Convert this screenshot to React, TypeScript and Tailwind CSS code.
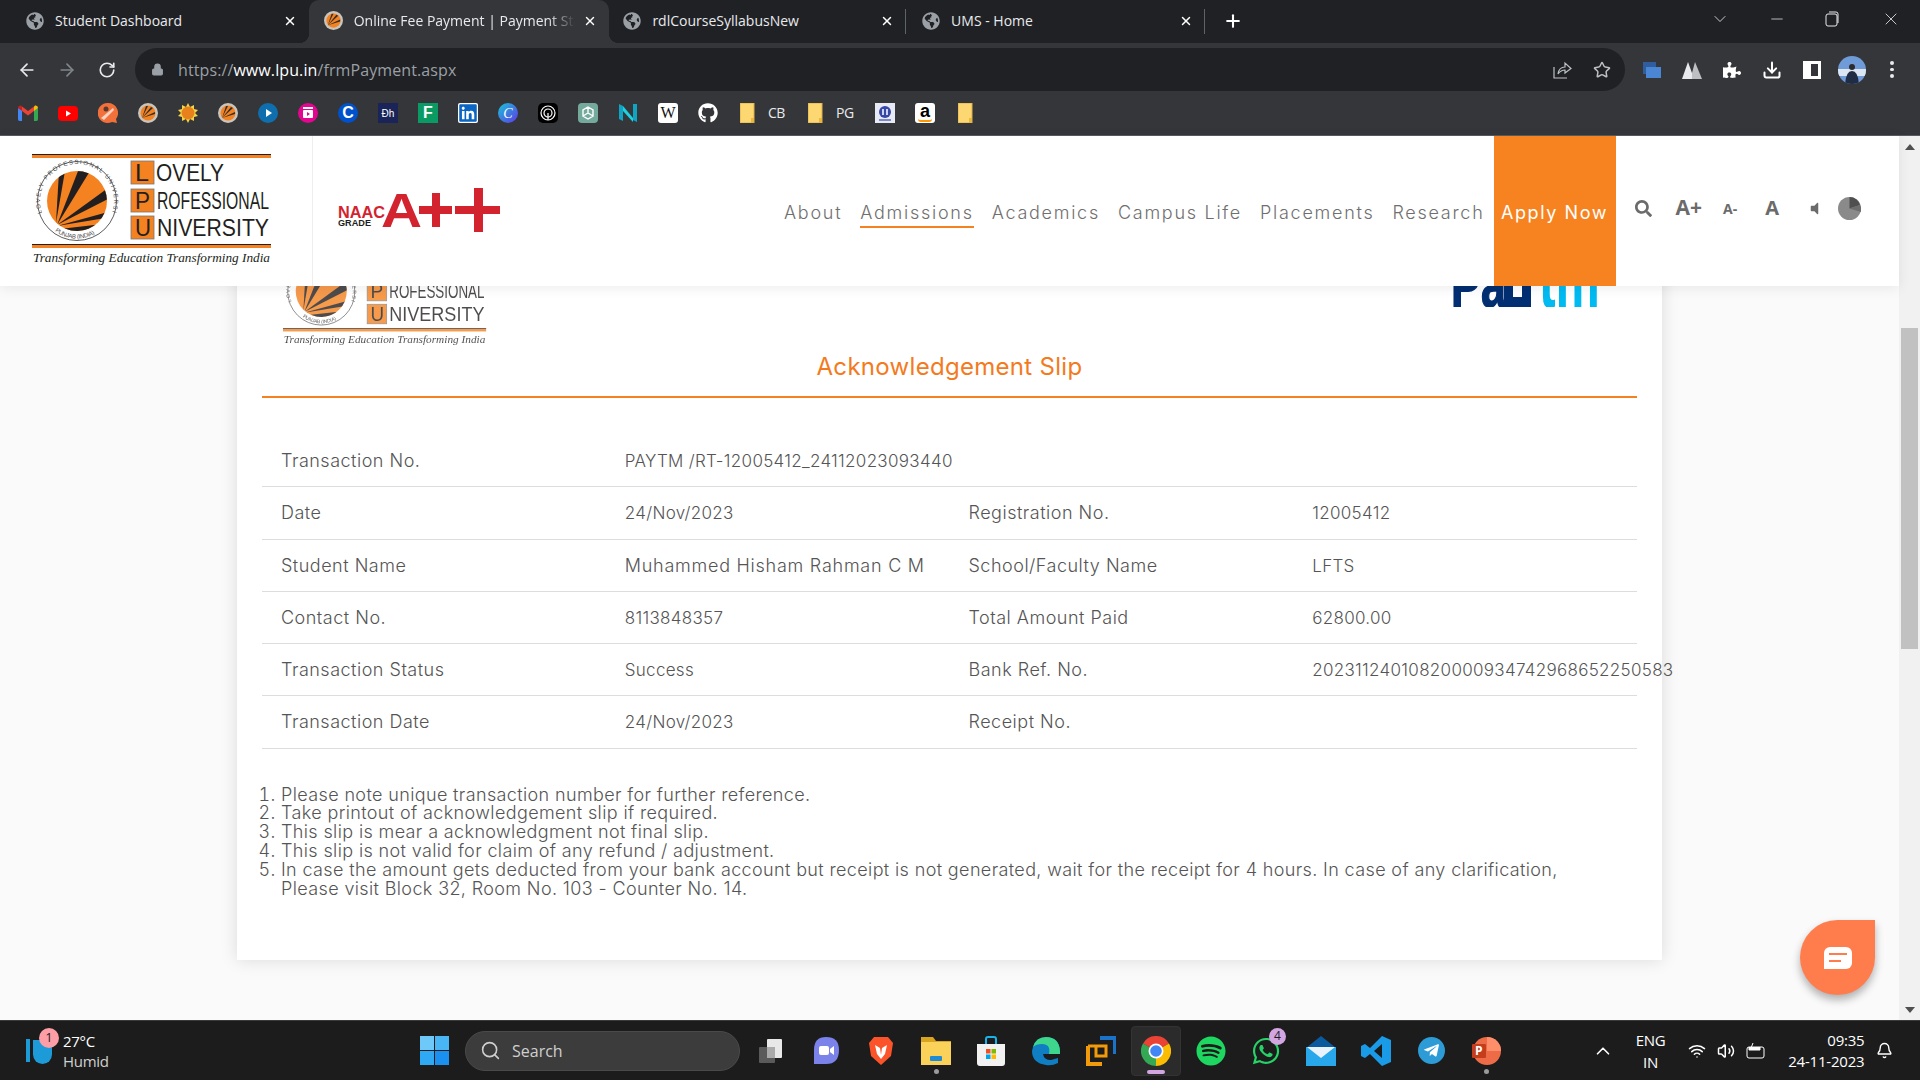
import type { ReactNode } from "react";
import { FaGlobeAmericas, FaGithub, FaWhatsapp, FaTelegramPlane, FaSpotify, FaLinkedin, FaPuzzlePiece, FaSearch, FaVolumeOff } from "react-icons/fa";
import { X, Plus, ArrowLeft, ArrowRight, RotateCw, Lock, Star, Download, ChevronDown, Minus, ChevronUp, Wifi, Volume2, Bell, Search } from "lucide-react";

const Globe = () => <FaGlobeAmericas className="size-[18px] text-[#9aa0a6] shrink-0" />;

const LpuFavicon = ({ size = 20 }: { size?: number }) => (
  <svg width={size} height={size} viewBox="0 0 20 20" className="shrink-0">
    <circle cx="10" cy="10" r="10" fill="#c9c4bc" />
    <circle cx="10" cy="10" r="7.5" fill="#f58220" />
    <path d="M4 15 L8 3 L10 3 Z M4 15 L13 4 L15 5 Z M4 15 L17 9 L17 11 Z" fill="#33302c" />
  </svg>
);

const Tab = ({ icon, title, active, divider }: { icon: ReactNode; title: string; active?: boolean; divider?: boolean }) => (
  <div className={`relative flex items-center h-[43px] pl-[16px] pr-[12px] pb-[2px] ${active ? "w-[300px] -mr-[1.3px] bg-[#35363a] rounded-t-[10px]" : "w-[298.7px]"}`}>
    {active && <div className="absolute bottom-0 -left-[10px] size-[10px] bg-[radial-gradient(circle_at_0_0,transparent_10px,#35363a_10.5px)]" />}
    {active && <div className="absolute bottom-0 -right-[10px] size-[10px] bg-[radial-gradient(circle_at_100%_0,transparent_10px,#35363a_10.5px)]" />}
    <div className="flex w-[18px] justify-center shrink-0">{icon}</div>
    <span className={`ml-[11px] flex-1 overflow-hidden whitespace-nowrap text-[14px] text-[#e8eaed] font-['Open_Sans',sans-serif] ${active ? "[mask-image:linear-gradient(to_right,black_88%,transparent)]" : ""}`}>{title}</span>
    <X className="size-[14px] text-white ml-[8px] shrink-0" strokeWidth={2.5} />
    {divider && <div className="absolute right-0 top-[9px] w-px h-[25px] bg-[#5f6368]" />}
  </div>
);

const TabStrip = () => (
  <div className="flex items-center h-[43px] bg-[#202124] pl-[10px] shrink-0">
    <Tab icon={<Globe />} title="Student Dashboard" />
    <Tab icon={<LpuFavicon size={19} />} title="Online Fee Payment | Payment Status" active />
    <Tab icon={<Globe />} title="rdlCourseSyllabusNew" divider />
    <Tab icon={<Globe />} title="UMS - Home" divider />
    <Plus className="size-[20px] text-white ml-[18px] mb-[2px]" strokeWidth={2.5} />
    <div className="ml-auto flex items-center pb-[6px] text-[#e8eaed]">
      <ChevronDown className="size-[20px] mr-[38px]" strokeWidth={1} />
      <Minus className="size-[18px] mr-[39px]" strokeWidth={1} />
      <svg width="14" height="16" viewBox="0 0 14 16" fill="none" stroke="currentColor" className="mr-[42px]">
        <rect x="1" y="3" width="11" height="12" rx="2" />
        <path d="M4 1 H11 Q13 1 13 3 V12" />
      </svg>
      <X className="size-[20px] mr-[19px]" strokeWidth={1} />
    </div>
  </div>
);

const Extension = ({ children }: { children: ReactNode }) => <div className="flex w-[40px] h-[40px] items-center justify-center shrink-0">{children}</div>;

const Toolbar = () => (
  <div className="flex items-center h-[48px] bg-[#35363a] shrink-0 pt-[5px] pb-0">
    <div className="flex w-[135px] pl-[7px] shrink-0">
      <Extension><ArrowLeft className="size-[20px] text-[#e8eaed]" /></Extension>
      <Extension><ArrowRight className="size-[20px] text-[#80868b]" /></Extension>
      <Extension><RotateCw className="size-[18px] text-[#e8eaed]" strokeWidth={2.2} /></Extension>
    </div>
    <div className="flex items-center flex-1 h-[43px] bg-[#202124] rounded-full pl-[16px] pr-[3px]">
      <Lock className="size-[13px] text-[#9aa0a6] fill-[#9aa0a6]" />
      <div className="ml-[14px] flex-1 text-[16px] text-[#9aa0a6] font-['Open_Sans',sans-serif] tracking-[0.1px]">
        https://<span className="text-white">www.lpu.in</span>/frmPayment.aspx
      </div>
      <Extension>
        <svg width="20" height="20" viewBox="0 0 20 20" fill="none" stroke="#bdc1c6" strokeWidth="1.2">
          <path d="M2 7 V18 H15" />
          <path d="M6 14 Q7 7 13 7 V3 L19 8.5 L13 13 V10 Q9 10 6 14 Z" />
        </svg>
      </Extension>
      <Extension><Star className="size-[18px] text-[#bdc1c6]" strokeWidth={2} /></Extension>
    </div>
    <div className="flex w-[295px] pl-[7px] shrink-0 items-center">
      <Extension>
        <svg width="20" height="20" viewBox="0 0 20 20"><rect x="1" y="2" width="13" height="12" fill="#2f5d9e" /><rect x="4" y="7" width="15" height="11" fill="#4a86d4" /></svg>
      </Extension>
      <Extension>
        <svg width="20" height="18" viewBox="0 0 20 18"><path d="M0 18 L6 1 L10 12 L10 18 Z" fill="#e8eaed" /><path d="M10 12 L13 1 L20 18 L10 18 Z" fill="#bdbfc2" /></svg>
      </Extension>
      <Extension><FaPuzzlePiece className="size-[18px] text-white" /></Extension>
      <Extension><Download className="size-[20px] text-white" strokeWidth={2.4} /></Extension>
      <Extension>
        <div className="flex size-[18px] justify-end bg-white"><div className="w-[7px] h-[12px] my-[3px] mr-[3px] bg-[#35363a]" /></div>
      </Extension>
      <Extension>
        <svg width="28" height="28" viewBox="0 0 28 28">
          <clipPath id="avatar"><circle cx="14" cy="14" r="14" /></clipPath>
          <g clipPath="url(#avatar)">
            <rect width="28" height="28" fill="#6f9bd8" />
            <path d="M0 13 H28 V20 H0 Z" fill="#dbe6f2" />
            <circle cx="14" cy="11" r="3" fill="#2b2a2e" />
            <path d="M7 28 Q8 15 14 15 Q20 15 21 28 Z" fill="#1f2c44" />
          </g>
        </svg>
      </Extension>
      <Extension>
        <div className="flex flex-col gap-[3px]"><div className="size-[3.5px] rounded-full bg-[#e8eaed]" /><div className="size-[3.5px] rounded-full bg-[#e8eaed]" /><div className="size-[3.5px] rounded-full bg-[#e8eaed]" /></div>
      </Extension>
    </div>
  </div>
);

const Folder = () => (
  <svg width="15" height="20" viewBox="0 0 15 20">
    <path d="M0 0 H14 V20 H0 Z" fill="#fcd772" />
    <path d="M11 20 V15 H14 V20 Z" fill="#e8b93e" />
    <path d="M0 0 H14 V20 H0 Z" fill="none" stroke="#e0b040" />
  </svg>
);

const Mark = ({ className, children }: { className: string; children?: ReactNode }) => (
  <div className={`flex size-[20px] items-center justify-center overflow-hidden font-['Liberation_Sans',sans-serif] font-bold text-white ${className}`}>{children}</div>
);

const bookmarks: ReactNode[] = [
  <svg key="g" width="20" height="16" viewBox="0 0 20 16">
    <path d="M0 14 V3 L4 5 V16 H1.5 Q0 16 0 14 Z" fill="#4285f4" />
    <path d="M20 14 V3 L16 5 V16 H18.5 Q20 16 20 14 Z" fill="#34a853" />
    <path d="M4 6 L10 10.5 L16 6 V1.5 L10 6 L4 1.5 Z" fill="#ea4335" />
    <path d="M0 3 Q0 0 3 .5 L4 1.5 V6 Z" fill="#c5221f" />
    <path d="M20 3 Q20 0 17 .5 L16 1.5 V6 Z" fill="#fbbc04" />
  </svg>,
  <svg key="y" width="20" height="15" viewBox="0 0 20 15"><rect width="20" height="15" rx="4" fill="#f00" /><path d="M8 4.5 L13 7.5 L8 10.5 Z" fill="#fff" /></svg>,
  <svg key="o" width="20" height="20" viewBox="0 0 20 20"><path d="M10 0 A10 10 0 0 1 18 16 L19 20 L14 19 A10 10 0 1 1 10 0 Z" fill="#f2703a" /><path d="M3 15 L15 5 L16 7 L6 17 Z" fill="#fbd3c0" /><circle cx="8" cy="6" r="2.5" fill="#5b3a2e" /></svg>,
  <LpuFavicon key="l1" />,
  <svg key="s" width="20" height="20" viewBox="0 0 20 20"><path d="M10 0 L12 4 L16 2 L16 6 L20 7 L17 10 L20 13 L16 14 L16 18 L12 16 L10 20 L8 16 L4 18 L4 14 L0 13 L3 10 L0 7 L4 6 L4 2 L8 4 Z" fill="#f5d547" /><circle cx="10" cy="10" r="6.5" fill="#e8801c" /></svg>,
  <LpuFavicon key="l2" />,
  <svg key="p" width="20" height="20" viewBox="0 0 20 20"><circle cx="10" cy="10" r="10" fill="#0f6fae" /><path d="M8 6 L14 10 L8 14 Z" fill="#fff" /></svg>,
  <svg key="c" width="20" height="20" viewBox="0 0 20 20"><circle cx="10" cy="10" r="10" fill="#e2078e" /><rect x="5" y="7" width="10" height="8" rx="1" fill="#fff" /><path d="M5 4 H15 V6 H5 Z" fill="#fff" /><path d="M9 9 L12 11 L9 13 Z" fill="#e2078e" /></svg>,
  <Mark key="cb" className="rounded-full bg-[#0052cc] text-[16px]">C</Mark>,
  <Mark key="dh" className="bg-[#1a2459] text-[10px] !font-normal">Ðh</Mark>,
  <Mark key="f" className="bg-[#0a9a63] text-[16px]">F</Mark>,
  <FaLinkedin key="li" className="size-[20px] text-[#0a66c2] bg-white rounded-[2px]" />,
  <div key="cv" className="flex size-[20px] items-center justify-center rounded-full bg-[linear-gradient(135deg,#19c5d8,#5f38e8)] text-white text-[14px] italic font-['Liberation_Serif',serif]">C</div>,
  <svg key="fp" width="20" height="20" viewBox="0 0 20 20" fill="none"><rect width="20" height="20" rx="5" fill="#000" /><circle cx="10" cy="10" r="7" stroke="#fff" strokeWidth="1.2" /><circle cx="10" cy="10" r="4" stroke="#fff" strokeWidth="1.2" /><path d="M10 10 V17" stroke="#fff" strokeWidth="1.2" /></svg>,
  <svg key="gpt" width="20" height="20" viewBox="0 0 20 20" fill="none"><rect width="20" height="20" rx="4" fill="#74aa9c" /><path d="M10 4 L15 7 V13 L10 16 L5 13 V7 Z M10 4 V10 M15 13 L10 10 L5 13" stroke="#fff" strokeWidth="1.4" /></svg>,
  <svg key="n" width="20" height="20" viewBox="0 0 20 20"><path d="M1 1 L5 3 V18 L1 16 Z" fill="#0fa4c4" /><path d="M5 3 L15 15 V19 L5 8 Z" fill="#1fd0e0" /><path d="M15 1 H19 V19 L15 17 Z" fill="#0fa4c4" /></svg>,
  <div key="w" className="flex size-[20px] items-center justify-center rounded-[3px] bg-white text-[#111] text-[16px] font-['Liberation_Serif',serif]">W</div>,
  <FaGithub key="gh" className="size-[20px] text-white" />,
];

const Bookmarks = () => (
  <div className="flex items-center h-[45px] bg-[#35363a] pl-[8px] shrink-0 border-b border-[#5a5b5e]">
    {bookmarks.map((b, i) => (
      <div key={i} className="flex w-[40px] justify-center">{b}</div>
    ))}
    <div className="flex items-center w-[68px] pl-[12px] gap-[13px] text-[14px] leading-[18px] pb-[1px] text-[#e8eaed] font-['Open_Sans',sans-serif] tracking-[-0.5px]"><Folder />CB</div>
    <div className="flex items-center w-[69px] pl-[12px] gap-[13px] text-[14px] leading-[18px] pb-[1px] text-[#e8eaed] font-['Open_Sans',sans-serif] tracking-[-0.5px]"><Folder />PG</div>
    <div className="flex w-[40px] justify-center">
      <svg width="20" height="20" viewBox="0 0 20 20"><rect width="20" height="20" fill="#e7e9f5" /><circle cx="10" cy="9" r="6" fill="#3548a8" /><path d="M8 6 V12 M12 6 V12" stroke="#fff" strokeWidth="1.5" /><rect x="4" y="16" width="12" height="2" fill="#7c89c9" /></svg>
    </div>
    <div className="flex w-[40px] justify-center">
      <div className="relative flex size-[20px] justify-center rounded-[3px] bg-white text-black text-[18px] font-bold leading-[16px] font-['Liberation_Sans',sans-serif]">
        a
        <div className="absolute bottom-[1px] left-[3px] w-[14px] h-[3px] rounded-b-full border-b-2 border-[#f90]" />
      </div>
    </div>
    <div className="flex w-[40px] justify-center"><Folder /></div>
  </div>
);

const LpuLogo = ({ width, id }: { width: number; id: string }) => (
  <svg width={width} height={(width * 120) / 240} viewBox="0 0 240 120" className="shrink-0">
    <defs>
      <clipPath id={`${id}-disc`}><circle cx="45" cy="50" r="30" /></clipPath>
      <path id={`${id}-top`} d="M10 62 A37 37 0 1 1 80 62" />
      <path id={`${id}-bottom`} d="M23 80 A36 36 0 0 0 67 80" />
    </defs>
    <rect x="0" y="4" width="239" height="3" fill="#f58220" />
    <rect x="0" y="3" width="239" height="1" fill="#231f20" />
    <rect x="0" y="94" width="239" height="3" fill="#f58220" />
    <rect x="0" y="93" width="239" height="1" fill="#231f20" />
    <circle cx="45" cy="50" r="39.5" fill="#fff" stroke="#333" strokeWidth="0.8" />
    <circle cx="45" cy="50" r="30" fill="#f58220" />
    <g clipPath={`url(#${id}-disc)`} fill="#231f20">
      <path d="M24 72 L27 20 L33 20 Z" />
      <path d="M25 74 L48 15 L58 20 Z" />
      <path d="M25 74 L80 34 L80 46 Z" />
      <path d="M25 75 L80 60 L80 66 Z" />
      <path d="M28 78 L80 72 L80 76 L30 82 Z" />
    </g>
    <g fontFamily="'Liberation Sans',sans-serif" fontSize="6" fill="#444">
      <text><textPath href={`#${id}-top`} textLength="150">LOVELY PROFESSIONAL UNIVERSITY</textPath></text>
      <text><textPath href={`#${id}-bottom`} textLength="42">PUNJAB (INDIA)</textPath></text>
    </g>
    <g fill="#f58220" stroke="#777" strokeWidth="0.8">
      <rect x="99" y="10" width="23" height="23" />
      <rect x="99" y="38" width="23" height="23" />
      <rect x="99" y="65" width="23" height="23" />
    </g>
    <g fontFamily="'Liberation Sans',sans-serif" fill="#231f20" fontSize="24">
      <text x="103" y="30" textLength="14" lengthAdjust="spacingAndGlyphs">L</text>
      <text x="103" y="58" textLength="15" lengthAdjust="spacingAndGlyphs">P</text>
      <text x="103" y="85" textLength="16" lengthAdjust="spacingAndGlyphs">U</text>
      <text x="124" y="30" textLength="68" lengthAdjust="spacingAndGlyphs">OVELY</text>
      <text x="125" y="58" textLength="112" lengthAdjust="spacingAndGlyphs">ROFESSIONAL</text>
      <text x="125" y="85" textLength="112" lengthAdjust="spacingAndGlyphs">NIVERSITY</text>
    </g>
    <text x="1" y="111" textLength="237" lengthAdjust="spacingAndGlyphs" fontFamily="'Liberation Serif',serif" fontStyle="italic" fontSize="13" fill="#231f20">Transforming Education Transforming India</text>
  </svg>
);

const NaacMark = () => (
  <svg width="165" height="46" viewBox="0 0 165 46" className="shrink-0">
    <text x="0" y="30" fontFamily="'Liberation Sans',sans-serif" fontWeight="bold" fontSize="17" fill="#d2232f" textLength="47" lengthAdjust="spacingAndGlyphs">NAAC</text>
    <text x="0" y="38" fontFamily="'Liberation Sans',sans-serif" fontWeight="bold" fontSize="9" fill="#231f20" textLength="33" lengthAdjust="spacingAndGlyphs">GRADE</text>
    <text x="43" y="39" fontFamily="'Liberation Sans',sans-serif" fontWeight="bold" fontSize="48" fill="#d2232f" textLength="41" lengthAdjust="spacingAndGlyphs">A</text>
    <path d="M81 18 H114 V26 H81 Z M94 5 H102 V39 H94 Z" fill="#d2232f" />
    <path d="M117 18 H162 V26 H117 Z M136 0 H145 V44 H136 Z" fill="#d2232f" />
  </svg>
);

const navItems = ["About", "Admissions", "Academics", "Campus Life", "Placements", "Research"];

const SiteHeader = () => (
  <header className="relative z-10 flex items-stretch h-[150px] bg-white shadow-[0_2px_12px_rgba(0,0,0,0.08)] shrink-0">
    <div className="flex items-center w-[313px] pl-[32px] border-r border-[#eeeeee] shrink-0">
      <LpuLogo width={240} id="head" />
    </div>
    <div className="flex items-center pl-[25px] w-[471px] shrink-0"><NaacMark /></div>
    <nav className="flex items-center gap-[18px] pt-[3px] text-[18px] leading-[26px] font-light text-[#6f6f6f] tracking-[1.73px] font-['Inter',sans-serif]">
      {navItems.map((item) => (
        <span key={item} className={`whitespace-nowrap ${item === "Admissions" ? "pt-[2px] border-b-2 border-[#f58220]" : ""}`}>{item}</span>
      ))}
    </nav>
    <div className="flex items-center justify-center w-[122px] ml-[9px] pt-[3px] bg-[#f78320] text-white text-[18px] tracking-[1.6px] font-['Inter',sans-serif] shrink-0">Apply Now</div>
    <div className="flex items-center pl-[19px] pb-[6px] text-[#6b6b6b] font-['Open_Sans',sans-serif] font-bold">
      <FaSearch className="size-[17px]" />
      <span className="ml-[24px] text-[21px]">A+</span>
      <span className="ml-[21px] text-[14px]">A-</span>
      <span className="ml-[28px] text-[20px]">A</span>
      <FaVolumeOff className="ml-[28px] size-[15px]" />
      <svg width="23" height="23" viewBox="0 0 23 23" className="ml-[16px]">
        <circle cx="11.5" cy="11.5" r="11.5" fill="#8a8a8a" />
        <path d="M11.5 11.5 L11.5 0 A11.5 11.5 0 0 1 22 8 Z" fill="#4f4f4f" />
        <path d="M11.5 11.5 L22 8 A11.5 11.5 0 0 1 23 15 Z" fill="#6d6d6d" />
      </svg>
    </div>
  </header>
);

const rows: [string, string, string?, string?][] = [
  ["Transaction No.", "PAYTM /RT-12005412_24112023093440"],
  ["Date", "24/Nov/2023", "Registration No.", "12005412"],
  ["Student Name", "Muhammed Hisham Rahman C M", "School/Faculty Name", "LFTS"],
  ["Contact No.", "8113848357", "Total Amount Paid", "62800.00"],
  ["Transaction Status", "Success", "Bank Ref. No.", "20231124010820000934742968652250583"],
  ["Transaction Date", "24/Nov/2023", "Receipt No.", ""],
];

const Label = ({ children }: { children?: string }) => (
  <span className="pl-[19px] whitespace-nowrap leading-[24px] text-[18px] tracking-[0.5px]">{children}</span>
);

const Value = ({ children }: { children?: string }) => (
  <span className={`pl-[19px] whitespace-nowrap leading-[24px] ${children === "Muhammed Hisham Rahman C M" ? "text-[18px] tracking-[0.75px]" : "text-[17px] tracking-[0.3px]"}`}>{children}</span>
);

const Slip = () => (
  <div className="w-[1425px] h-[712px] ml-[237px] -mt-[38px] bg-white shadow-[0_0_16px_rgba(0,0,0,0.13)] font-['Inter',sans-serif] shrink-0">
    <div className="flex justify-between pl-[46px] pr-[62px] h-[102px]">
      <div className="pt-[1px] opacity-80"><LpuLogo width={204} id="slip" /></div>
      <svg width="149" height="21" viewBox="0 0 149 21" className="mt-[38px]">
        <g fontFamily="'Liberation Sans',sans-serif" fontWeight="bold">
          <text x="0" y="21" fontSize="64" fill="#022f72" stroke="#022f72" strokeWidth="1.5" textLength="80" lengthAdjust="spacingAndGlyphs">Pa<tspan fill="none" stroke="none">y</tspan></text>
          <text x="88" y="21" fontSize="84" fill="#00baf2" textLength="61" lengthAdjust="spacingAndGlyphs">tm</text>
        </g>
        <path d="M53 0 H62 V11 H71 V0 H80 V21 H53 Z" fill="#022f72" />
      </svg>
    </div>
    <h1 className="mt-[2px] text-center text-[24px] leading-[30px] text-[#f47a20] tracking-[0.3px]">Acknowledgement Slip</h1>
    <div className="mx-[25px]">
      <div className="mt-[14px] h-[2px] bg-[#f58220]" />
      <div className="mt-[37px] font-light text-[#555555]">
        {rows.map((r) => (
          <div key={r[0]} className="grid grid-cols-4 h-[52.25px] pt-[1px] items-center border-b border-[#dddddd]">
            <Label>{r[0]}</Label>
            <Value>{r[1]}</Value>
            <Label>{r[2]}</Label>
            <Value>{r[3]}</Value>
          </div>
        ))}
      </div>
      <ol className="mt-[37px] pl-[19px] list-decimal text-[18px] leading-[18.9px] tracking-[0.37px] font-light text-[#555555]">
        <li>Please note unique transaction number for further reference.</li>
        <li>Take printout of acknowledgement slip if required.</li>
        <li>This slip is mear a acknowledgment not final slip.</li>
        <li>This slip is not valid for claim of any refund / adjustment.</li>
        <li>In case the amount gets deducted from your bank account but receipt is not generated, wait for the receipt for 4 hours. In case of any clarification,<br />Please visit Block 32, Room No. 103 - Counter No. 14.</li>
      </ol>
    </div>
  </div>
);

const Scrollbar = () => (
  <div className="flex flex-col items-center w-[21px] bg-[#f1f1f1] shrink-0">
    <div className="flex h-[21px] items-center"><div className="border-x-[5px] border-b-[6px] border-x-transparent border-b-[#505050]" /></div>
    <div className="mt-[171px] w-[17px] h-[321px] bg-[#c1c1c1]" />
    <div className="mt-auto flex h-[21px] items-center"><div className="border-x-[5px] border-t-[6px] border-x-transparent border-t-[#505050]" /></div>
  </div>
);

const ChatBubble = () => (
  <div className="absolute right-[24px] bottom-[25px] z-20 flex size-[75px] items-center justify-center rounded-full rounded-tr-[9px] bg-[#ff7d4d] shadow-[0_5px_9px_rgba(0,0,0,0.3)]">
    <div className="flex flex-col justify-center gap-[5px] w-[28px] h-[22px] pl-[5px] rounded-[6px] rounded-bl-none bg-white">
      <div className="w-[18px] h-[2px] bg-[#ff7d4d]" />
      <div className="w-[12px] h-[2px] bg-[#ff7d4d]" />
    </div>
  </div>
);

const TaskSlot = ({ children, active, dot }: { children: ReactNode; active?: boolean; dot?: boolean }) => (
  <div className={`relative flex w-[50px] h-[50px] mx-[2.5px] items-center justify-center rounded-[4px] shrink-0 ${active ? "bg-[#2b2b2b] border border-[#333333]" : ""}`}>
    {children}
    {dot && <div className="absolute bottom-[2px] size-[5px] rounded-full bg-[#9b9b9b]" />}
    {active && <div className="absolute bottom-[1px] w-[18px] h-[4px] rounded-full bg-[#d3a6e2]" />}
  </div>
);

const Taskbar = () => (
  <footer className="flex items-center h-[60px] bg-[#1c1c1c] border-t border-[#3a3a3a] shrink-0 text-white font-['Open_Sans',sans-serif]">
    <div className="relative flex items-center w-[404px] pl-[26px] shrink-0">
      <div className="w-[4px] h-[23px] bg-[#1d9bd8] mr-[3px]" />
      <div className="w-[19px] h-[24px] mt-[2px] rounded-b-full rounded-t-[10px] bg-[#1d9bd8]" />
      <div className="absolute left-[39px] top-[-3px] flex size-[20px] items-center justify-center rounded-full bg-[#fd9ea6] text-[#1c1c1c] text-[13px]">1</div>
      <div className="ml-[11px] text-[15px] leading-[20px] tracking-[-0.3px]">
        <div>27°C</div>
        <div className="text-[#d0d0d0]">Humid</div>
      </div>
    </div>
    <div className="flex w-[61px] items-center justify-center shrink-0">
      <svg width="29" height="29" viewBox="0 0 29 29">
        <rect width="14" height="14" fill="#6fc9f8" /><rect x="15" width="14" height="14" fill="#49b5f5" /><rect y="15" width="14" height="14" fill="#2fa9f3" /><rect x="15" y="15" width="14" height="14" fill="#1a91f0" />
      </svg>
    </div>
    <div className="flex items-center w-[275px] h-[40px] pl-[14px] rounded-full bg-[#3c3c3c] border border-[#4a4a4a] text-[#cfcfcf] text-[16px] shrink-0">
      <Search className="size-[21px]" strokeWidth={1.8} />
      <span className="ml-[11px]">Search</span>
    </div>
    <div className="flex pl-[3.5px]">
      <TaskSlot>
        <svg width="26" height="26" viewBox="0 0 26 26" className="ml-[2px]"><rect y="9" width="16" height="16" rx="1" fill="#5a5a5a" /><rect x="8" y="1" width="15" height="19" rx="1" fill="#e8e8e8" /><rect x="8" y="9" width="8" height="11" fill="#aaa" /></svg>
      </TaskSlot>
      <TaskSlot>
        <svg width="28" height="30" viewBox="0 0 28 30"><path d="M14 1 Q27 1 27 14 Q27 28 14 28 H2 V14 Q2 1 14 1 Z" fill="#7b83eb" /><rect x="7" y="10" width="10" height="9" rx="2" fill="#fff" /><path d="M18 13 L22 10 V19 L18 16 Z" fill="#fff" /></svg>
      </TaskSlot>
      <TaskSlot>
        <svg width="26" height="30" viewBox="0 0 26 30"><path d="M6 1 H20 L25 7 L23 20 L13 29 L3 20 L1 7 Z" fill="#fb542b" /><path d="M7 9 L12 12 L13 19 L14 12 L19 9 L17 18 L13 23 L9 18 Z" fill="#fff" /></svg>
      </TaskSlot>
      <TaskSlot dot>
        <svg width="30" height="30" viewBox="0 0 30 30"><path d="M0 1 H12 L15 5 H30 V28 H0 Z" fill="#d9a521" /><rect y="6" width="30" height="23" fill="#fad25a" /><rect x="9" y="20" width="12" height="5" rx="1" fill="#1f8ad6" /></svg>
      </TaskSlot>
      <TaskSlot>
        <svg width="28" height="30" viewBox="0 0 28 30"><path d="M0 8 H28 V27 Q28 30 25 30 H3 Q0 30 0 27 Z" fill="#f2f2f2" /><path d="M9 8 V3 Q9 1 11 1 H17 Q19 1 19 3 V8" fill="none" stroke="#18b3e8" strokeWidth="2" /><rect x="9" y="13" width="4.5" height="4.5" fill="#f25022" /><rect x="14.5" y="13" width="4.5" height="4.5" fill="#7fba00" /><rect x="9" y="18.5" width="4.5" height="4.5" fill="#00a4ef" /><rect x="14.5" y="18.5" width="4.5" height="4.5" fill="#ffb900" /></svg>
      </TaskSlot>
      <TaskSlot>
        <svg width="30" height="30" viewBox="0 0 30 30"><path d="M2 11 Q5 1 15 1 Q28 1 29 15 L29 18 H12 Q13 24 20 24 L27 22 V27 Q21 30 15 29 Q1 27 1 15 Z" fill="#0f7ec2" /><path d="M2 11 Q5 1 15 1 Q28 1 29 15 L29 18 H18 Q20 8 11 8 Q5 8 2 11 Z" fill="#3dd68c" /></svg>
      </TaskSlot>
      <TaskSlot>
        <svg width="30" height="30" viewBox="0 0 30 30" fill="none"><path d="M14 2 H29 V18" stroke="#1a73c9" strokeWidth="4" /><path d="M16 28 H2 V10" stroke="#f19a0b" strokeWidth="4" /><path d="M2 10 H20 V20 H10 V10" stroke="#f19a0b" strokeWidth="3" /></svg>
      </TaskSlot>
      <TaskSlot active>
        <svg width="30" height="30" viewBox="0 0 30 30">
          <path d="M15 15 L2 7.5 A15 15 0 0 1 28 7.5 Z" fill="#ea4335" />
          <path d="M15 15 L28 7.5 A15 15 0 0 1 15 30 Z" fill="#fbbc04" />
          <path d="M15 15 L15 30 A15 15 0 0 1 2 7.5 Z" fill="#34a853" />
          <circle cx="15" cy="15" r="7.5" fill="#fff" /><circle cx="15" cy="15" r="5.8" fill="#4285f4" />
        </svg>
      </TaskSlot>
      <TaskSlot><FaSpotify className="size-[30px] text-[#1ed760]" /></TaskSlot>
      <TaskSlot>
        <FaWhatsapp className="size-[30px] text-[#25d366]" />
        <div className="absolute right-[5px] top-[2px] flex size-[17px] items-center justify-center rounded-full bg-[#d3a6e2] text-[#1c1c1c] text-[12px]">4</div>
      </TaskSlot>
      <TaskSlot>
        <svg width="30" height="30" viewBox="0 0 30 30"><path d="M15 0 L30 12 H0 Z" fill="#0b5a9e" /><rect y="11" width="30" height="19" fill="#28a8ea" /><path d="M1 11 H29 L15 22 Z" fill="#eaf3fb" /></svg>
      </TaskSlot>
      <TaskSlot>
        <svg width="30" height="30" viewBox="0 0 30 30"><path d="M21 0 L30 4 V26 L21 30 L9 18 L4 22 L0 20 V10 L4 8 L9 12 Z M21 8 L13 15 L21 22 Z" fill="#1a9be8" /></svg>
      </TaskSlot>
      <TaskSlot>
        <div className="flex size-[27px] items-center justify-center rounded-full bg-[#2d9cd6]"><FaTelegramPlane className="size-[17px] text-white" /></div>
      </TaskSlot>
      <TaskSlot dot>
        <svg width="30" height="30" viewBox="0 0 30 30"><circle cx="16" cy="15" r="14" fill="#ed6c47" /><path d="M16 1 A14 14 0 0 1 30 15 H16 Z" fill="#ff8f6b" /><rect x="1" y="8" width="14" height="14" rx="1" fill="#c43e1c" /><text x="4" y="19" fontSize="12" fontWeight="bold" fill="#fff" fontFamily="'Open Sans',sans-serif">P</text></svg>
      </TaskSlot>
    </div>
    <ChevronUp className="ml-[78px] size-[22px] text-white" strokeWidth={1.8} />
    <div className="w-[40px] ml-[17px] text-center text-[15px] leading-[22px] tracking-[-0.3px] shrink-0">
      <div>ENG</div>
      <div>IN</div>
    </div>
    <Wifi className="ml-[17px] size-[18px]" />
    <Volume2 className="ml-[11px] size-[18px]" />
    <svg width="20" height="18" viewBox="0 0 20 18" fill="none" stroke="#fff" className="ml-[11px]"><rect x="1" y="5" width="17" height="11" rx="2" /><path d="M3 5 V8 H14 V5" fill="#fff" /><path d="M7 1 L5 6" /></svg>
    <div className="w-[87px] ml-[12px] text-right text-[15px] leading-[21px] tracking-[-0.2px] shrink-0">
      <div>09:35</div>
      <div>24-11-2023</div>
    </div>
    <Bell className="ml-[11px] size-[17px]" />
  </footer>
);

export default function App() {
  return (
    <div className="flex flex-col w-[1920px] h-[1080px] overflow-hidden bg-[#fafafa]">
      <TabStrip />
      <Toolbar />
      <Bookmarks />
      <div className="flex flex-1 min-h-0">
        <main className="relative flex flex-col flex-1 min-w-0">
          <SiteHeader />
          <div className="flex-1 min-h-0 overflow-hidden">
            <Slip />
          </div>
          <ChatBubble />
        </main>
        <Scrollbar />
      </div>
      <Taskbar />
    </div>
  );
}
